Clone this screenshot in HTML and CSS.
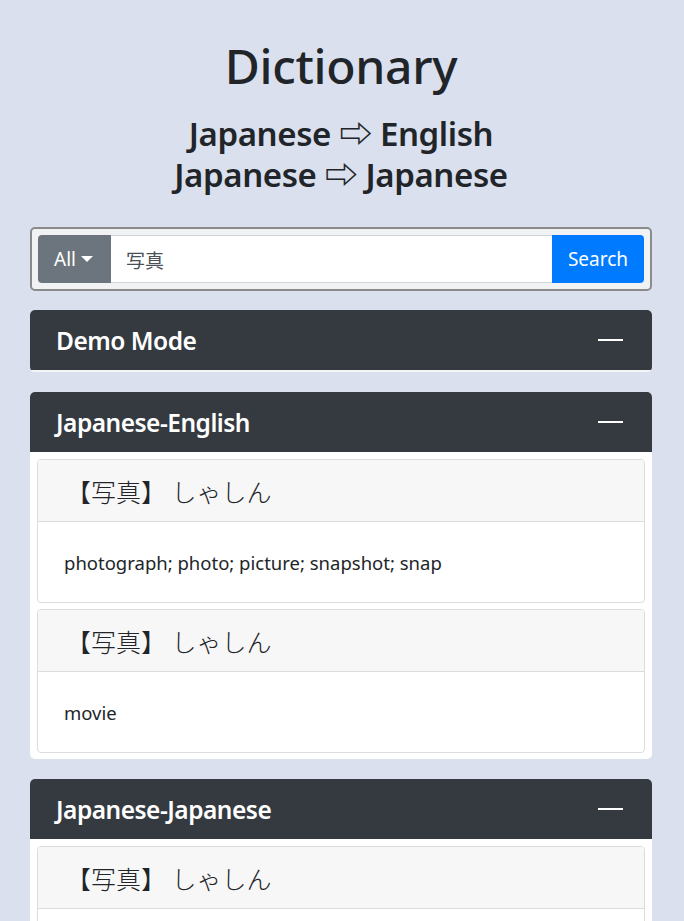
FILE: index.html
```html
<!DOCTYPE html>
<html lang="en">
<head>
<meta charset="utf-8">
<title>Dictionary</title>
<link rel="stylesheet" href="styles.css">
</head>
<body>
<div class="page">
  <header class="hero">
    <h1 class="title">Dictionary</h1>
    <h2 class="subtitle">Japanese ⇨ English<br>Japanese ⇨ Japanese</h2>
  </header>

  <form class="search-box">
    <div class="input-group">
      <button type="button" class="btn btn-mode">All<span class="caret"></span></button>
      <input class="search-input" type="text" value="写真">
      <button type="button" class="btn btn-search">Search</button>
    </div>
  </form>

  <section class="panel">
    <div class="panel-head"><span class="panel-title">Demo Mode</span><span class="collapse-bar"></span></div>
    <div class="panel-body panel-body-empty"></div>
  </section>

  <section class="panel">
    <div class="panel-head"><span class="panel-title">Japanese-English</span><span class="collapse-bar"></span></div>
    <div class="panel-body">
      <div class="entry">
        <div class="entry-head">【写真】 しゃしん</div>
        <div class="entry-body">photograph; photo; picture; snapshot; snap</div>
      </div>
      <div class="entry">
        <div class="entry-head">【写真】 しゃしん</div>
        <div class="entry-body">movie</div>
      </div>
    </div>
  </section>

  <section class="panel">
    <div class="panel-head"><span class="panel-title">Japanese-Japanese</span><span class="collapse-bar"></span></div>
    <div class="panel-body">
      <div class="entry">
        <div class="entry-head">【写真】 しゃしん</div>
        <div class="entry-body entry-body-empty"></div>
      </div>
    </div>
  </section>
</div>
</body>
</html>
```

FILE: styles.css
```css
* { box-sizing: border-box; }

html, body {
  margin: 0;
  padding: 0;
  background: #dae0ed;
}

body {
  font-family: "Noto Sans", "Noto Sans CJK JP", sans-serif;
  color: #212529;
  overflow: hidden;
}

.page {
  padding: 0 32px 30px 30px;
}

.hero {
  text-align: center;
  padding-top: 31px;
}

.title {
  margin: 0;
  font-size: 48px;
  font-weight: 500;
  line-height: 70px;
  letter-spacing: -0.3px;
}

.subtitle {
  margin: 12px 0 0 0;
  font-size: 33px;
  font-weight: 600;
  line-height: 41px;
  letter-spacing: -0.4px;
}

.search-box {
  margin: 32px 0 19px 0;
  border: 2px solid #8b8b8b;
  border-radius: 5px;
  background: #f1f2f4;
  padding: 6px;
}

.input-group {
  display: flex;
  height: 48px;
}

.btn {
  border: none;
  font-family: "Noto Sans", sans-serif;
  font-size: 19px;
  color: #fff;
  padding: 0 16px;
  display: flex;
  align-items: center;
}

.btn-mode {
  width: 73px;
  background: #6c757d;
  border-radius: 4px 0 0 4px;
}

.caret {
  display: inline-block;
  margin-left: 5px;
  width: 0;
  height: 0;
  border-left: 6px solid transparent;
  border-right: 6px solid transparent;
  border-top: 6px solid #fff;
}

.search-input {
  flex: 1;
  min-width: 0;
  border: 1px solid #ced4da;
  border-left: none;
  border-right: none;
  background: #fff;
  font-family: "Noto Sans CJK JP", sans-serif;
  font-size: 19px;
  color: #495057;
  padding: 0 15px;
  outline: none;
}

.btn-search {
  width: 92px;
  background: #007bff;
  border-radius: 0 4px 4px 0;
  justify-content: center;
}

.panel {
  background: #fff;
  border-radius: 5px;
  margin-bottom: 20px;
  overflow: hidden;
}

.panel-head {
  background: #343a40;
  height: 60px;
  display: flex;
  align-items: center;
  justify-content: space-between;
  padding: 0 29px 0 26px;
}

.panel-title {
  color: #fff;
  font-size: 24.5px;
  font-weight: 600;
  letter-spacing: -0.5px;
}

.collapse-bar {
  width: 25px;
  height: 2px;
  background: #fff;
}

.panel-body {
  padding: 7px 7px 6px 7px;
  display: flex;
  flex-direction: column;
  gap: 6px;
}

.panel-body-empty {
  padding: 0;
  height: 2px;
  background: #f4f5f7;
}

.entry {
  border: 1px solid #dcdcdc;
  border-radius: 4px;
  overflow: hidden;
}

.entry-head {
  background: #f7f7f7;
  border-bottom: 1px solid #dcdcdc;
  height: 62px;
  display: flex;
  align-items: center;
  padding: 0 28px;
  font-family: "Noto Sans CJK JP", sans-serif;
  font-size: 25px;
  font-weight: 300;
  color: #212529;
}

.entry-body {
  padding: 27px 26px 26px 26px;
  font-size: 18.5px;
  line-height: 27px;
}

.entry-body-empty {
  height: 80px;
}
```
